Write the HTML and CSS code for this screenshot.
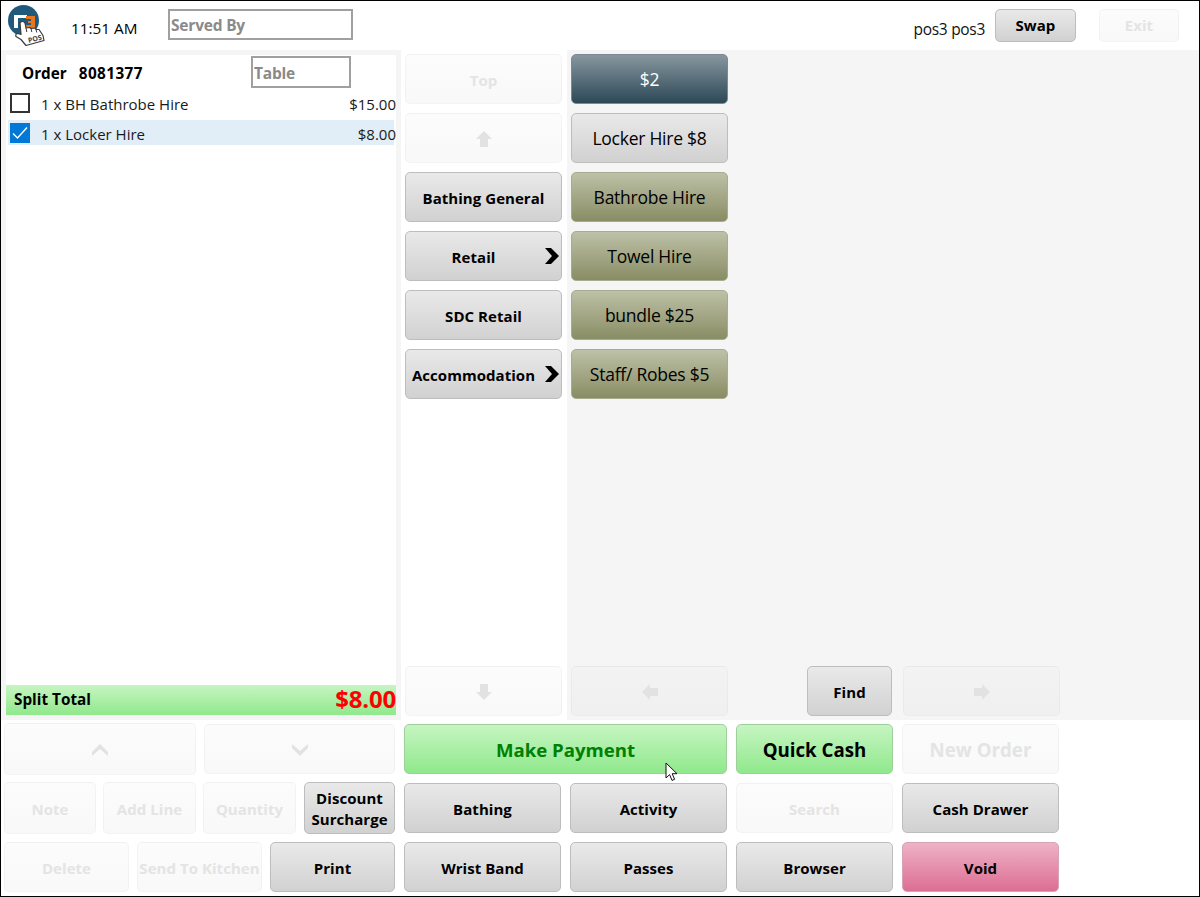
FILE: index.html
```html
<!DOCTYPE html>
<html lang="en">
<head>
<meta charset="utf-8">
<title>POS</title>
<link rel="stylesheet" href="styles.css">
</head>
<body>
<div class="app">
  <header class="top">
    <svg class="logo" width="38" height="42" viewBox="0 0 38 42">
      <circle cx="15.5" cy="15.5" r="15.5" fill="#1f5a7c"/>
      <path d="M6 10h13v3H10v10H6z" fill="#fff"/>
      <path d="M18 11h9v12h-9v-3h5v-2h-3v-2h3v-2h-5z" fill="#e8761e"/>
      <path d="M12 18q2.5-3 5 0l1 5 4-.5 1 1 4-.5 1 1.5h3l4 6 1 5-18 5-5-6-5-3q-1-3 2-3l3 1z" fill="#fff" stroke="#3a3a3a" stroke-width="1.2" stroke-linejoin="round"/>
      <path d="M18 23l.8 4M23 23.5l.8 3.5M28 24.5l.8 3" fill="none" stroke="#3a3a3a" stroke-width="1"/>
      <text x="20" y="36.5" class="logo-text" transform="rotate(-14 26 34)">POS</text>
    </svg>
    <span class="time">11:51 AM</span>
    <div class="field served">Served By</div>
    <span class="user">pos3 pos3</span>
    <button class="btn swap">Swap</button>
    <button class="btn off exit">Exit</button>
  </header>

  <main class="main">
    <section class="order">
      <div class="order-body">
        <div class="order-head">
          <b class="order-no">Order<span class="order-num">8081377</span></b>
          <div class="field table">Table</div>
        </div>
        <div class="line">
          <span class="check"></span>
          <span class="line-name">1 x BH Bathrobe Hire</span>
          <span class="line-price">$15.00</span>
        </div>
        <div class="line selected">
          <span class="check checked">
            <svg width="20" height="20" viewBox="0 0 20 20"><path d="M3 10.5l4.5 4.5L17 4.5" fill="none" stroke="#fff" stroke-width="1.4"/></svg>
          </span>
          <span class="line-name">1 x Locker Hire</span>
          <span class="line-price">$8.00</span>
        </div>
      </div>
      <div class="total">
        <b class="total-label">Split Total</b>
        <b class="total-value">$8.00</b>
      </div>
    </section>

    <section class="cats">
      <div class="stack">
        <button class="btn off">Top</button>
        <button class="btn off">
          <svg class="arrow" width="16" height="16" viewBox="0 0 16 16"><path d="M8 0l8 8h-4v8H4V8H0z"/></svg>
        </button>
        <button class="btn">Bathing General</button>
        <button class="btn more"><span class="more-label">Retail</span>
          <svg class="chev" width="14" height="16" viewBox="0 0 14 16"><path d="M0 0h6l8 8-8 8H0l7-8z"/></svg>
        </button>
        <button class="btn">SDC Retail</button>
        <button class="btn more"><span class="more-label">Accommodation</span>
          <svg class="chev" width="14" height="16" viewBox="0 0 14 16"><path d="M0 0h6l8 8-8 8H0l7-8z"/></svg>
        </button>
      </div>
      <button class="btn off">
        <svg class="arrow" width="16" height="16" viewBox="0 0 16 16"><path d="M8 16L0 8h4V0h8v8h4z"/></svg>
      </button>
    </section>

    <section class="items">
      <div class="stack item-stack">
        <button class="btn item dark">$2</button>
        <button class="btn item">Locker Hire $8</button>
        <button class="btn item olive">Bathrobe Hire</button>
        <button class="btn item olive">Towel Hire</button>
        <button class="btn item olive">bundle $25</button>
        <button class="btn item olive">Staff/ Robes $5</button>
      </div>
      <div class="pager">
        <button class="btn off page-prev">
          <svg class="arrow" width="16" height="16" viewBox="0 0 16 16"><path d="M0 8l8-8v4h8v8H8v4z"/></svg>
        </button>
        <button class="btn find">Find</button>
        <button class="btn off page-next">
          <svg class="arrow" width="16" height="16" viewBox="0 0 16 16"><path d="M16 8l-8 8v-4H0V4h8V0z"/></svg>
        </button>
      </div>
    </section>
  </main>

  <footer class="bottom">
    <div class="tools">
      <div class="tool-row two">
        <button class="btn off tall">
          <svg class="arrow" width="16" height="12" viewBox="0 0 16 12"><path d="M8 0l8 8v4L8 5l-8 7V8z"/></svg>
        </button>
        <button class="btn off">
          <svg class="arrow" width="16" height="12" viewBox="0 0 16 12"><path d="M8 12L0 4V0l8 7 8-7v4z"/></svg>
        </button>
      </div>
      <div class="tool-row four">
        <button class="btn off tall">Note</button>
        <button class="btn off tall">Add Line</button>
        <button class="btn off tall">Quantity</button>
        <button class="btn tall discount">Discount<br>Surcharge</button>
      </div>
      <div class="tool-row three">
        <button class="btn off">Delete</button>
        <button class="btn off">Send To Kitchen</button>
        <button class="btn">Print</button>
      </div>
    </div>
    <div class="actions">
      <button class="btn green pay">Make Payment</button>
      <button class="btn green quick">Quick Cash</button>
      <button class="btn off new-order">New Order</button>
      <button class="btn">Bathing</button>
      <button class="btn">Activity</button>
      <button class="btn off">Search</button>
      <button class="btn">Cash Drawer</button>
      <button class="btn">Wrist Band</button>
      <button class="btn">Passes</button>
      <button class="btn">Browser</button>
      <button class="btn pink">Void</button>
    </div>
  </footer>

  <svg class="cursor" width="14" height="20" viewBox="0 0 14 20"><path d="M1 1v15l3.6-3.4L7 18.4l2.6-1.1-2.4-5.6H12z" fill="#fff" stroke="#111" stroke-width="1"/></svg>
</div>
</body>
</html>
```
FILE: styles.css
```css
* { box-sizing: border-box; }
html, body { margin: 0; padding: 0; background: #fff; }
body { font-family: "Open Sans", "Noto Sans", sans-serif; color: #000; }

.app {
  position: relative;
  width: 1200px;
  height: 897px;
  border: 1px solid #000;
  display: flex;
  flex-direction: column;
  overflow: hidden;
  background: #fff;
}

.btn {
  display: flex;
  align-items: center;
  justify-content: center;
  height: 50px;
  margin: 0;
  padding: 2px 0 0;
  border: 1.5px solid #bdbdbd;
  border-radius: 5px;
  background: linear-gradient(#e9e9e9, #d1d1d1);
  font-family: inherit;
  font-size: 15px;
  font-weight: 700;
  letter-spacing: .05px;
  color: #000;
  line-height: 21px;
  white-space: nowrap;
}
.btn.off {
  border: 1px solid rgba(190, 190, 190, .14);
  background: linear-gradient(rgba(233, 233, 233, .14), rgba(209, 209, 209, .14));
  color: #e4e4e4;
}
.arrow { fill: #e2e2e2; }

/* header */
.top {
  height: 49px;
  flex: none;
  display: flex;
  align-items: center;
  padding-left: 7px;
}
.logo { flex: none; margin-top: 1px; }
.logo-text { font-size: 7px; font-weight: 700; fill: #444; }
.time { margin-left: 25px; margin-top: 5px; font-size: 15.3px; width: 97px; }
.field {
  border: 2px solid #a0a0a0;
  font-size: 15.5px;
  font-weight: 700;
  letter-spacing: -.2px;
  color: #8a8a8a;
  padding: 1px 0 0 1px;
  display: flex;
  align-items: center;
}
.served { width: 185px; height: 31px; margin-top: -3px; }
.user { margin-left: auto; margin-top: 6px; font-size: 15.5px; letter-spacing: -.3px; color: #111; }
.swap { width: 81px; height: 33px; margin-left: 10px; margin-top: -1px; padding-top: 0; }
.btn.exit { width: 80px; height: 33px; margin-left: 23px; margin-right: 20px; margin-top: -1px; padding-top: 0; }

/* main */
.main {
  height: 670px;
  flex: none;
  display: flex;
}
.order {
  width: 400px;
  flex: none;
  padding: 5px;
  background: #f5f5f5;
  display: flex;
  flex-direction: column;
}
.order-body { flex: 1; background: #fff; padding: 1px 2px 0; }
.order-head { display: flex; align-items: center; height: 32px; padding-left: 14px; }
.order-no { width: 229px; font-size: 15.3px; margin-top: 1px; }
.order-num { margin-left: 12px; letter-spacing: .4px; }
.table { width: 100px; height: 32px; }
.line {
  display: flex;
  align-items: center;
  height: 25px;
  margin-top: 2px;
  font-size: 15px;
  color: #1a1a1a;
  padding-left: 2px;
  width: 386px;
}
.line + .line { margin-top: 5px; }
.line-name { flex: 1; margin-left: 11px; margin-top: 3px; }
.line-price { margin-right: -2px; margin-top: 3px; }
.selected { background: #e1eef8; }
.check {
  width: 20px;
  height: 20px;
  margin-top: 1px;
  border: 2px solid #333;
  flex: none;
  display: block;
}
.checked { border: 0; background: #0078d7; }
.checked svg { display: block; }
.total {
  height: 30px;
  flex: none;
  display: flex;
  align-items: center;
  justify-content: space-between;
  background: linear-gradient(#c6f5c2, #90e88c);
  padding: 0 0 3px 8px;
}
.total-label { font-size: 15.3px; }
.total-value { font-size: 24px; line-height: 27px; color: #f00; letter-spacing: -.2px; }

.cats {
  width: 166px;
  flex: none;
  padding: 4px 5px 4px 4px;
  display: flex;
  flex-direction: column;
  justify-content: space-between;
  background: #fff;
}
.stack { display: flex; flex-direction: column; gap: 9px; }
.more { position: relative; padding-right: 20px; }
.more .more-label { flex: none; }
.chev { position: absolute; right: 2px; top: 16px; fill: #000; }

.items {
  flex: 1;
  padding: 4px 0 4px 4px;
  display: flex;
  flex-direction: column;
  justify-content: space-between;
  background: #f5f5f5;
}
.item-stack { width: 157px; }
.item { font-size: 17.5px; font-weight: 400; letter-spacing: -.25px; padding-top: 0; }
.dark { background: linear-gradient(#87979f, #2c4857); border-color: #7b8a92; color: #fff; }
.olive { background: linear-gradient(#bdc1a7, #898d64); border-color: #a8ab90; }
.pager { display: flex; }
.page-prev { width: 157px; }
.find { width: 85px; margin-left: 79px; }
.page-next { width: 157px; margin-left: 11px; }

/* footer */
.bottom {
  flex: 1;
  display: flex;
  padding-top: 4px;
}
.tools {
  width: 395px;
  flex: none;
  margin-left: 3px;
  margin-top: -1px;
  display: flex;
  flex-direction: column;
  gap: 7px;
}
.tool-row { display: grid; height: 52px; align-items: center; }
.two { grid-template-columns: 192px 191px; column-gap: 8px; }
.four { grid-template-columns: 92px 93px 93px 92px; column-gap: 7px; }
.three { grid-template-columns: 125px 125px 125px; column-gap: 8px; height: 50px; margin-top: 1px; }
.tall { height: 52px; }
.discount { line-height: 21px; margin-left: 1px; width: 91px; padding-top: 1px; }

.actions {
  margin-left: 5px;
  width: 655px;
  display: grid;
  grid-template-columns: repeat(4, 157px);
  grid-auto-rows: 50px;
  gap: 9px;
}
.pay { grid-column: span 2; font-size: 18.6px; color: #008000; letter-spacing: 0; padding-top: 1px; }
.green { background: linear-gradient(#c6f5c2, #90e88c); border-color: #9fd09c; }
.quick { font-size: 18.7px; letter-spacing: 0; padding-top: 1px; }
.btn.new-order { font-size: 18.7px; letter-spacing: 0; padding-top: 1px; }
.pink { background: linear-gradient(#eeb2c6, #dc6e93); border-color: #d9a3b6; }

.cursor { position: absolute; left: 664px; top: 761px; }
```
